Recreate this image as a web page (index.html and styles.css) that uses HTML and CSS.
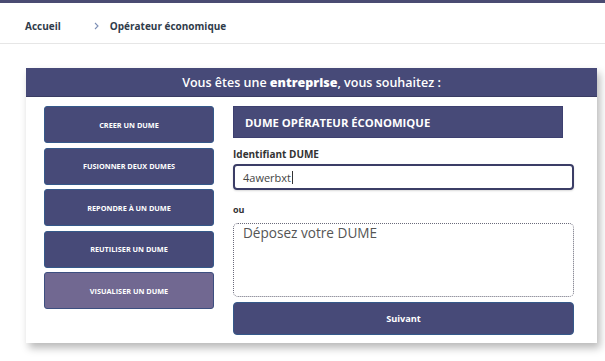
FILE: index.html
```html
<!DOCTYPE html>
<html lang="fr">
<head>
<meta charset="utf-8">
<link rel="stylesheet" href="styles.css">
</head>
<body>
<div class="topbar"></div>
<nav class="breadcrumb">
  <span class="crumb">Accueil</span>
  <svg class="chev" width="5" height="8" viewBox="0 0 5 8"><path d="M1 1 L4 4 L1 7" fill="none" stroke="#7d8fb5" stroke-width="1.1"/></svg>
  <span class="crumb">Opérateur économique</span>
</nav>
<section class="card">
  <header class="card-head">Vous êtes une <strong>entreprise</strong>, vous souhaitez :</header>
  <div class="card-body">
    <div class="actions">
      <div class="act">CREER UN DUME</div>
      <div class="act">FUSIONNER DEUX DUMES</div>
      <div class="act">REPONDRE À UN DUME</div>
      <div class="act">REUTILISER UN DUME</div>
      <div class="act active">VISUALISER UN DUME</div>
    </div>
    <div class="form">
      <div class="form-title">DUME OPÉRATEUR ÉCONOMIQUE</div>
      <div class="label">Identifiant DUME</div>
      <div class="input">4awerbxt<span class="caret"></span></div>
      <div class="label or">ou</div>
      <div class="drop">Déposez votre DUME</div>
      <div class="next">Suivant</div>
    </div>
  </div>
</section>
</body>
</html>
```
FILE: styles.css
```css
html, body { margin: 0; padding: 0; background: #fff; }
body { font-family: "Open Sans", "DejaVu Sans", sans-serif; width: 605px; height: 361px; overflow: hidden; }
.topbar { height: 3px; background: #4a4b72; }
.breadcrumb {
  height: 41px; border-bottom: 1px solid #e6e6e6;
  display: flex; align-items: center; padding-left: 25px; box-sizing: border-box;
  font-size: 10px; font-weight: 700; color: #2f3b4a; padding-top: 14px; padding-bottom: 8px;
}
.chev { margin: 0 11px 0 33px; flex: none; }
.card {
  margin: 24px 0 0 26px; width: 571px; height: 275px; background: #fff;
  box-shadow: 3px 5px 8px rgba(0,0,0,0.28);
  display: flex; flex-direction: column;
}
.card-head {
  height: 29px; background: #474a78; color: #fff; text-align: center;
  font-size: 12.5px; font-weight: 600; line-height: 30px; border-bottom: 1px solid #3a3c63; box-sizing: border-box;
}
.card-head strong { font-weight: 800; }
.card-body { display: flex; padding: 9px 23px 0 18px; gap: 19px; }
.actions { width: 170px; display: flex; flex-direction: column; gap: 4.5px; }
.act {
  height: 37px; box-sizing: border-box; background: #474a78; border: 1px solid #35598a;
  border-radius: 3px; color: #fff; font-size: 7.3px; font-weight: 700;
  display: flex; align-items: center; justify-content: center;
}
.act.active { background: #716891; border-color: #3d4f80; }
.form { flex: 1; display: flex; flex-direction: column; }
.form-title {
  width: 330px; height: 32px; background: #474a78; color: #fff; font-size: 11.3px; font-weight: 700;
  display: flex; align-items: center; padding-left: 11px; box-sizing: border-box; border: 1px solid #3d4070;
}
.label { font-size: 10px; font-weight: 700; color: #333; margin-top: 10px; height: 16px; line-height: 12px; }
.label.or { font-size: 9px; margin-top: 14px; height: 19px; }
.input {
  height: 26px; box-sizing: border-box; border: 2px solid #3b3d66; border-radius: 4px;
  font-size: 11px; color: #444; padding-left: 8px; display: flex; align-items: center;
  box-shadow: 0 1px 2px rgba(0,0,0,0.15);
}
.caret { display: inline-block; width: 1px; height: 13px; background: #333; margin-left: 1px; }
.drop {
  height: 74px; box-sizing: border-box; border: 1px dotted #6a6a7a; border-radius: 5px;
  font-size: 13.6px; color: #555; padding: 0 0 0 9px; line-height: 18px;
}
.next {
  margin-top: 5px; height: 33px; box-sizing: border-box; background: #474a78; border: 1px solid #35598a;
  border-radius: 4px; color: #fff; font-size: 9.2px; font-weight: 700;
  display: flex; align-items: center; justify-content: center;
}
```
